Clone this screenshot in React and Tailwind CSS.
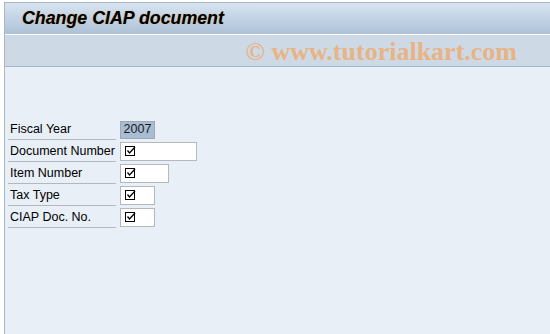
const fields = [
  { label: 'Fiscal Year', value: '2007', width: 'w-[35px]', filled: true },
  { label: 'Document Number', width: 'w-[77px]' },
  { label: 'Item Number', width: 'w-[49px]' },
  { label: 'Tax Type', width: 'w-[35px]' },
  { label: 'CIAP Doc. No.', width: 'w-[35px]' },
];

function CheckIcon() {
  return (
    <svg width="11" height="11" viewBox="0 0 11 11" className="block">
      <rect x="0.5" y="0.5" width="9" height="9" fill="white" stroke="#000" strokeWidth="1" />
      <path d="M2.5 4.5 L4.5 7 L10 1" fill="none" stroke="#000" strokeWidth="1.3" />
    </svg>
  );
}

export default function App() {
  return (
    <div className="h-[334px] w-[550px] overflow-hidden bg-white pl-[4px] pt-[2px] font-['Liberation_Sans',Arial,sans-serif]">
      <div className="flex h-full flex-col border-l border-t border-[#a9b8c8] bg-[#e8eff7]">
        <div className="flex h-[31px] items-center bg-gradient-to-b from-[#d8e4f0] to-[#adc2d8] pl-[17px]">
          <h1 className="text-[17.8px] font-bold italic text-black [text-shadow:0_0_1px_#c98a3a]">
            Change CIAP document
          </h1>
        </div>
        <div className="h-px bg-white" />
        <div className="flex h-[32px] items-center justify-end border-b border-[#a4b6c8] bg-[#cddae6] pr-[33px] pt-[3px]">
          <span className="font-['Liberation_Serif',serif] text-[26px] font-bold leading-none text-[#e8b385]">
            © www.tutorialkart.com
          </span>
        </div>

        <div className="flex flex-col gap-px pl-[3px] pt-[52px]">
          {fields.map((f) => (
            <div key={f.label} className="flex h-[21px] items-center">
              <div className="flex h-full w-[108px] items-center border-b border-[#b4b8bd] pl-[2px] text-[12.5px] text-black">
                {f.label}
              </div>
              <div className="w-[4px]" />
              {f.filled ? (
                <div
                  className={`${f.width} flex h-[18px] items-center justify-center border border-[#9fa9b4] bg-[#a8bdd4] text-[12.5px] text-[#1a1a1a]`}
                >
                  {f.value}
                </div>
              ) : (
                <div
                  className={`${f.width} flex h-[19px] items-center border border-[#b3b8be] bg-white pl-[4px]`}
                >
                  <CheckIcon />
                </div>
              )}
            </div>
          ))}
        </div>
      </div>
    </div>
  );
}
